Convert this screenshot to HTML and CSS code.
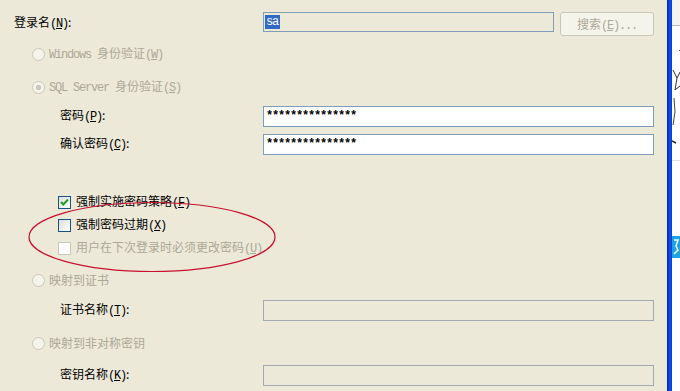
FILE: index.html
```html
<!DOCTYPE html>
<html lang="zh-CN">
<head>
  <meta charset="UTF-8">
  <title>登录属性 - sa</title>
  <link rel="stylesheet" href="styles.css">
</head>
<body>
  <div class="screen">
    <div class="panel">
      <div class="row login">
        <span class="lbl">登录名<span class="hk">(<u>N</u>)</span>:</span>
        <div class="box ro"><span class="sel">sa</span></div>
        <button class="btn" disabled>搜索<span class="hk">(<u>E</u>)...</span></button>
      </div>

      <div class="row opt r-win off">
        <span class="radio"></span>
        <span><span class="hk">Windows </span>身份验证<span class="hk">(<u>W</u>)</span></span>
      </div>
      <div class="row opt r-sql off">
        <span class="radio on"></span>
        <span><span class="hk">SQL Server </span>身份验证<span class="hk">(<u>S</u>)</span></span>
      </div>

      <div class="field r-pwd">
        <span class="lbl">密码<span class="hk">(<u>P</u>)</span>:</span>
        <div class="box"><span class="stars">***************</span></div>
      </div>
      <div class="field r-pwd">
        <span class="lbl">确认密码<span class="hk">(<u>C</u>)</span>:</span>
        <div class="box"><span class="stars">***************</span></div>
      </div>

      <div class="row sub r-cb1">
        <span class="check">
          <svg width="11" height="11" viewBox="0 0 11 11"><path d="M2 5 L4.3 7.5 L9 2.5" fill="none" stroke="#21a121" stroke-width="2"/></svg>
        </span>
        <span>强制实施密码策略<span class="hk">(<u>F</u>)</span></span>
      </div>
      <div class="row sub r-cb">
        <span class="check"></span>
        <span>强制密码过期<span class="hk">(<u>X</u>)</span></span>
      </div>
      <div class="row sub r-cb off">
        <span class="check"></span>
        <span>用户在下次登录时必须更改密码<span class="hk">(<u>U</u>)</span></span>
      </div>

      <div class="row opt r-cert off">
        <span class="radio"></span>
        <span>映射到证书</span>
      </div>
      <div class="field r-cname">
        <span class="lbl">证书名称<span class="hk">(<u>T</u>)</span>:</span>
        <div class="box dis"></div>
      </div>
      <div class="row opt r-asym off">
        <span class="radio"></span>
        <span>映射到非对称密钥</span>
      </div>
      <div class="field r-kname">
        <span class="lbl">密钥名称<span class="hk">(<u>K</u>)</span>:</span>
        <div class="box dis"></div>
      </div>

      <!-- red marker drawn over the options -->
      <svg class="mark" width="667" height="391" viewBox="0 0 667 391">
        <ellipse cx="152" cy="237" rx="123" ry="34.5" fill="none" stroke="#c8102e" stroke-width="1.2"/>
      </svg>
    </div>
    <div class="frame"></div>
    <div class="side">
      <svg width="8" height="391" viewBox="0 0 8 391">
        <rect x="0" y="0" width="8" height="25" fill="#f3f3f1"/>
        <line x1="0" y1="25.5" x2="8" y2="25.5" stroke="#b4b4b0"/>
        <path d="M7 50 L8 51" stroke="#555" stroke-width="1"/>
        <path d="M1 70 L5 78 L8 72 M5 78 L3 90 L8 86" fill="none" stroke="#333" stroke-width="1"/>
        <path d="M2 98 L3 112 L1 125" fill="none" stroke="#444" stroke-width="1"/>
        <path d="M0 141 L4 143" stroke="#222" stroke-width="1.5"/>
        <line x1="0" y1="160.5" x2="8" y2="160.5" stroke="#e0e0e0"/>
        <rect x="0" y="236" width="8" height="22" fill="#1ba3e3"/>
        <path d="M2 240 L6 240 L4 246 L6 250 L2 254" fill="none" stroke="#fff" stroke-width="1.5"/>
      </svg>
    </div>
  </div>
</body>
</html>
```

FILE: styles.css
```css
* { margin: 0; padding: 0; box-sizing: border-box; }
body { background-color: #ece9d8; color: #000; font-family: "Noto Sans CJK SC", sans-serif; font-size: 12px; overflow: hidden; }

.screen { display: flex; width: 680px; height: 391px; }
.panel { position: relative; width: 667px; padding: 12px 13px 0 14px; display: flex; flex-direction: column; }
.frame { width: 5px; background: linear-gradient(to right, #0020b0, #0a3fd9 35%, #0b50e8 70%, #0838d0); }
.side { flex: 1; background: #fff; }

.hk { font-family: "Liberation Mono", monospace; letter-spacing: -1.2px; }
u { text-decoration: underline; }

.row { display: flex; align-items: center; height: 20px; line-height: 20px; white-space: nowrap; }
.row.off { color: #aca899; }
.opt { padding-left: 18px; }
.sub { padding-left: 44px; }

.login { align-items: flex-start; height: 24px; }
.login .lbl { width: 249px; }
.login .box { flex: 1; height: 20px; }

.field { display: grid; grid-template-columns: 249px 1fr; align-items: center; height: 21px; line-height: 21px; white-space: nowrap; }
.field .lbl { padding-left: 46px; }

.box { height: 21px; border: 1px solid #7f9db9; background: #fff; padding: 0 1px; display: flex; align-items: center; }
.box.ro { background: #ece9d8; }
.box.dis { background: #ece9d8; border-color: #a3aab2; }
.sel { background: #316ac5; color: #fff; font-family: "Liberation Mono", monospace; letter-spacing: -1.2px; line-height: 14px; padding: 0 2px 0 1px; }
.stars { font-family: "Liberation Mono", monospace; font-weight: bold; letter-spacing: -1.2px; padding-left: 1px; line-height: 14px; }

.btn {
  width: 94px; height: 24px; margin-left: 6px;
  border: 1px solid #c9c7ba; border-radius: 3px;
  background: #f5f4ea; color: #aca899;
  font: inherit; line-height: 22px;
}

.radio { width: 13px; height: 13px; border-radius: 50%; border: 1px solid #cac8bb; background: #f5f4ea; margin-right: 4px; flex: none; }
.radio.on { background: radial-gradient(circle, #cac8bb 0 2.5px, #f5f4ea 3px); }

.check {
  width: 13px; height: 13px; margin-right: 5px; flex: none;
  border: 1px solid #1c5180;
  background: linear-gradient(135deg, #dcdcd7, #fff);
  display: flex; align-items: center; justify-content: center;
}
.row.off .check { border-color: #cac8bb; background: #fff; }

.r-win { margin-top: 8px; }
.r-sql { margin-top: 13px; }
.r-pwd { margin-top: 7px; }
.r-cb1 { margin-top: 39px; }
.r-cb { margin-top: 3px; }
.r-cert { margin-top: 12px; }
.r-cname { margin-top: 8px; }
.r-asym { margin-top: 14px; }
.r-kname { margin-top: 10px; }

.mark { position: absolute; left: 0; top: 0; pointer-events: none; }
```
